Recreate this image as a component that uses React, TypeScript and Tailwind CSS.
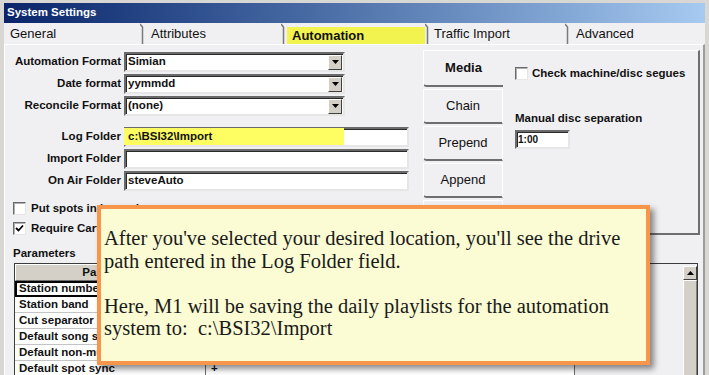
const tabs = [
  { label: 'General', w: 'w-[136px]', pl: 'pl-[6px]' },
  { label: 'Attributes', w: 'w-[137px]', pl: 'pl-[7px]' },
]

const rows = ['Station number', 'Station band', 'Cut separator', 'Default song sync', 'Default non-music sync', 'Default spot sync']

function TabSep() {
  return (
    <svg width="4" height="21" className="shrink-0">
      <path d="M0 1 L2.5 4 V21" stroke="#7a7a7a" strokeWidth="1.5" fill="none" />
    </svg>
  )
}

function DropButton() {
  return (
    <div className="mr-[1px] flex h-[15px] w-[14px] items-center justify-center border border-t-white border-l-white border-r-[#404040] border-b-[#404040] bg-[#d4d0c8]">
      <svg width="7" height="4">
        <path d="M0 0 H7 L3.5 4 Z" fill="#000" />
      </svg>
    </div>
  )
}

function Select({ value }: { value: string }) {
  return (
    <div className="flex h-[20px] w-[221px] items-center border-2 border-t-[#6a6a6a] border-l-[#6a6a6a] border-r-[#e6e6e6] border-b-[#e6e6e6] bg-white shadow-[inset_1px_1px_0_#2a2a2a]">
      <span className="flex-1 pl-[2px] font-bold">{value}</span>
      <DropButton />
    </div>
  )
}

function TextBox({ value, highlight }: { value?: string; highlight?: boolean }) {
  return (
    <div className="flex h-[20px] w-[285px] items-stretch border-2 border-t-[#6a6a6a] border-l-[#6a6a6a] border-r-[#e6e6e6] border-b-[#e6e6e6] bg-white shadow-[inset_1px_1px_0_#2a2a2a]">
      {highlight ? (
        <div className="-ml-[2px] -mt-[1px] flex w-[220px] items-center bg-[#fefe62] pl-[4px] font-bold">{value}</div>
      ) : (
        <div className="flex items-center pl-[2px] font-bold">{value}</div>
      )}
    </div>
  )
}

function Check({ checked }: { checked?: boolean }) {
  return (
    <div className="flex h-[13px] w-[13px] shrink-0 items-center justify-center border border-t-[#6a6a6a] border-l-[#6a6a6a] border-r-[#e6e6e6] border-b-[#e6e6e6] bg-white shadow-[inset_1px_1px_0_#b0b0b0]">
      {checked && (
        <svg width="9" height="9">
          <path d="M1 4 L3.5 6.5 L8 1.5" stroke="#000" strokeWidth="1.8" fill="none" />
        </svg>
      )}
    </div>
  )
}

function FormRow({ label, children }: { label: string; children: React.ReactNode }) {
  return (
    <div className="flex h-[20px] items-center">
      <div className="w-[116px] text-right font-bold whitespace-nowrap">{label}</div>
      <div className="ml-[3px]">{children}</div>
    </div>
  )
}

function SideTab({ label, active }: { label: string; active?: boolean }) {
  return (
    <div
      className={
        active
          ? 'flex h-[37px] items-center justify-center rounded-bl-[4px] border-t border-l border-b-2 border-t-white border-l-white border-b-[#6e6e6e] text-[13px] font-bold'
          : 'flex h-[35px] items-center justify-center rounded-bl-[4px] border-t border-l border-r border-b-2 border-t-white border-l-white border-r-white border-b-[#6e6e6e] text-[13px]'
      }
    >
      {label}
    </div>
  )
}

export default function App() {
  return (
    <div className="relative flex h-[375px] w-[709px] flex-col overflow-hidden bg-[#d9d7d3] px-[4px] pt-[3px] font-['Liberation_Sans',Arial,sans-serif] text-[11.5px] text-[#111]">
      {/* title bar */}
      <div className="flex h-[20px] shrink-0 items-center bg-linear-to-r from-[#0a246a] to-[#a6caf0] pl-[3px] text-[11.5px] font-bold text-white">
        System Settings
      </div>

      {/* tabs */}
      <div className="flex h-[21px] shrink-0 bg-[#f0eff2] text-[13px]">
        {tabs.map((t) => (
          <div key={t.label} className="flex shrink-0">
            <div className={`flex items-center ${t.w} ${t.pl}`}>{t.label}</div>
            <TabSep />
          </div>
        ))}
        <div className="w-[140px] shrink-0">
          <div className="mt-[4px] ml-[2px] h-[17px] bg-[#f3f34f] pl-[5px] leading-[17px] font-bold">Automation</div>
        </div>
        <TabSep />
        <div className="flex w-[136px] shrink-0 items-center pl-[5px]">Traffic Import</div>
        <TabSep />
        <div className="flex flex-1 items-center pl-[7px]">Advanced</div>
      </div>

      {/* content */}
      <div className="flex flex-1 flex-col border-t border-l border-r-2 border-t-white border-l-white border-r-[#9c9c9c] bg-[#f0eff2]">
        <div className="mt-[5px] flex">
          {/* left form */}
          <div className="flex w-[418px] flex-col pt-[2px]">
            <div className="flex flex-col gap-[2px]">
              <FormRow label="Automation Format"><Select value="Simian" /></FormRow>
              <FormRow label="Date format"><Select value="yymmdd" /></FormRow>
              <FormRow label="Reconcile Format"><Select value="(none)" /></FormRow>
            </div>
            <div className="mt-[11px] flex flex-col gap-[2px]">
              <FormRow label="Log Folder"><TextBox value="c:\BSI32\Import" highlight /></FormRow>
              <FormRow label="Import Folder"><TextBox /></FormRow>
              <FormRow label="On Air Folder"><TextBox value="steveAuto" /></FormRow>
            </div>
            <div className="mt-[11px] ml-[8px] flex flex-col gap-[7px] font-bold">
              <div className="flex h-[13px] items-center gap-[5px]">
                <Check />
                <span className="whitespace-nowrap">Put spots in log order</span>
              </div>
              <div className="flex h-[13px] items-center gap-[5px]">
                <Check checked />
                <span className="whitespace-nowrap">Require Cart numbers</span>
              </div>
            </div>
          </div>

          {/* side tabs */}
          <div className="flex w-[80px] flex-col gap-[2px]">
            <SideTab label="Media" active />
            <SideTab label="Chain" />
            <SideTab label="Prepend" />
            <SideTab label="Append" />
            <SideTab label="Insert" />
          </div>

          {/* media panel */}
          <div className="h-[185px] w-[197px] border-t border-r-2 border-b-2 border-t-white border-r-[#6e6e6e] border-b-[#6e6e6e] pt-[16px] pl-[12px] font-bold">
            <div className="flex h-[13px] items-center gap-[4px]">
              <Check />
              <span className="whitespace-nowrap">Check machine/disc segues</span>
            </div>
            <div className="mt-[32px] leading-[13px]">Manual disc separation</div>
            <div className="mt-[5px] flex h-[19px] w-[55px] items-center border-2 border-t-[#6a6a6a] border-l-[#6a6a6a] border-r-[#e6e6e6] border-b-[#e6e6e6] bg-white pl-[1px] text-[10px] shadow-[inset_1px_1px_0_#2a2a2a]">
              1:00
            </div>
          </div>
        </div>

        {/* parameters */}
        <div className="mt-[12px] ml-[8px] leading-[13px] font-bold">Parameters</div>
        <div className="mt-[3px] ml-[9px] flex w-[684px] flex-1 border-t border-l border-[#3c3c3c] font-bold">
          <div className="flex w-[668px] flex-col">
            <div className="flex h-[17px]">
              <div className="flex w-[191px] items-center justify-center border border-t-white border-l-white border-r-[#6e6e6e] border-b-[#6e6e6e] bg-[#d4d0c8]">Parameter</div>
              <div className="flex w-[369px] items-center justify-center border border-t-white border-l-white border-r-[#6e6e6e] border-b-[#6e6e6e] bg-[#d4d0c8]">Value</div>
            </div>
            {rows.map((r, i) => (
              <div key={r} className="flex h-[16px]">
                <div
                  className={
                    i === 0
                      ? 'flex w-[191px] items-center border-2 border-black bg-white pl-[2px] whitespace-nowrap'
                      : 'flex w-[191px] items-center border-r border-b border-r-[#6e6e6e] border-b-[#c4c4c4] bg-white pl-[4px] whitespace-nowrap'
                  }
                >
                  {r}
                </div>
                <div className="flex w-[369px] items-center border-r border-b border-r-[#6e6e6e] border-b-[#c4c4c4] bg-white pl-[5px]">
                  {i === rows.length - 1 ? '+' : ''}
                </div>
              </div>
            ))}
          </div>
          <div className="flex w-[15px] flex-col border-r border-[#3c3c3c]">
            <div className="mt-[2px] flex h-[14px] items-center justify-center border border-t-white border-l-white border-r-[#404040] border-b-[#404040] bg-[#d4d0c8]">
              <svg width="7" height="4">
                <path d="M0 4 H7 L3.5 0 Z" fill="#000" />
              </svg>
            </div>
            <div className="flex-1 border border-t-white border-l-white border-r-[#808080] border-b-[#808080] bg-[#d4d0c8]" />
          </div>
        </div>
      </div>

      {/* callout */}
      <div className="absolute top-[205px] left-[97px] h-[160px] w-[553px] border-4 border-[#f7964a] bg-[#fbfbd4] pt-[18px] pl-[3px] font-['Liberation_Serif','Times_New_Roman',serif] text-[20.5px] leading-[22.5px] whitespace-pre text-[#1a1a1a] shadow-[4px_4px_6px_rgba(0,0,0,0.45)]">
        {"After you've selected your desired location, you'll see the drive\npath entered in the Log Folder field.\n\nHere, M1 will be saving the daily playlists for the automation\nsystem to:  c:\\BSI32\\Import"}
      </div>
    </div>
  )
}
